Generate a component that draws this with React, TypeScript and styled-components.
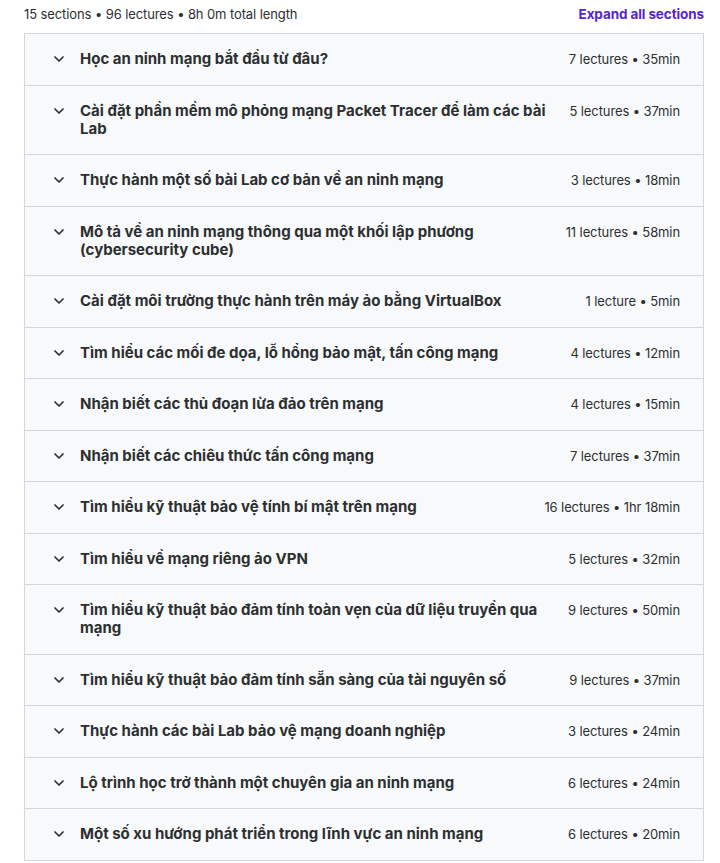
import React from "react";
import styled, { createGlobalStyle } from "styled-components";

const Global = createGlobalStyle`
  html, body { margin: 0; padding: 0; background: #ffffff; }
  body { font-family: Inter, "Noto Sans", sans-serif; color: #2d2f31; }
`;

const Page = styled.div`
  padding: 0 16px 0 24px;
  width: 720px;
  box-sizing: border-box;
`;

const TopBar = styled.div`
  display: flex;
  justify-content: space-between;
  align-items: center;
  height: 28px;
`;

const Summary = styled.span`
  font-size: 13px;
  color: #2d2f31;
  letter-spacing: -0.1px;
`;

const ExpandLink = styled.button`
  border: none;
  background: none;
  padding: 0;
  font-family: inherit;
  font-size: 13.5px;
  font-weight: 700;
  color: #5624d0;
  cursor: pointer;
  letter-spacing: -0.1px;
`;

const Panel = styled.div`
  margin-top: 5px;
  border: 1px solid #d1d7dc;
  border-bottom: none;
  width: 680px;
  box-sizing: border-box;
`;

const Row = styled.div`
  display: flex;
  align-items: flex-start;
  background: #f7f9fa;
  border-bottom: 1px solid #d1d7dc;
  padding: 16.25px 23px 16.25px 28px;
`;

const Chevron = styled.span`
  display: flex;
  width: 12px;
  height: 18px;
  align-items: center;
  justify-content: center;
  margin-right: 15px;
  flex-shrink: 0;
  color: #2d2f31;
`;

const Title = styled.h3`
  margin: 0;
  flex: 1;
  font-size: 15px;
  line-height: 18px;
  font-weight: 700;
  color: #2d2f31;
  letter-spacing: 0;
  padding-right: 22px;
`;

const Meta = styled.span`
  flex-shrink: 0;
  font-size: 13px;
  line-height: 18px;
  color: #2d2f31;
  letter-spacing: -0.1px;
`;

const sections: [string, string][] = [
  ["Học an ninh mạng bắt đầu từ đâu?", "7 lectures • 35min"],
  ["Cài đặt phần mềm mô phỏng mạng Packet Tracer để làm các bài Lab", "5 lectures • 37min"],
  ["Thực hành một số bài Lab cơ bản về an ninh mạng", "3 lectures • 18min"],
  ["Mô tả về an ninh mạng thông qua một khối lập phương (cybersecurity cube)", "11 lectures • 58min"],
  ["Cài đặt môi trường thực hành trên máy ảo bằng VirtualBox", "1 lecture • 5min"],
  ["Tìm hiểu các mối đe dọa, lỗ hổng bảo mật, tấn công mạng", "4 lectures • 12min"],
  ["Nhận biết các thủ đoạn lừa đảo trên mạng", "4 lectures • 15min"],
  ["Nhận biết các chiêu thức tấn công mạng", "7 lectures • 37min"],
  ["Tìm hiểu kỹ thuật bảo vệ tính bí mật trên mạng", "16 lectures • 1hr 18min"],
  ["Tìm hiểu về mạng riêng ảo VPN", "5 lectures • 32min"],
  ["Tìm hiểu kỹ thuật bảo đảm tính toàn vẹn của dữ liệu truyền qua mạng", "9 lectures • 50min"],
  ["Tìm hiểu kỹ thuật bảo đảm tính sẵn sàng của tài nguyên số", "9 lectures • 37min"],
  ["Thực hành các bài Lab bảo vệ mạng doanh nghiệp", "3 lectures • 24min"],
  ["Lộ trình học trở thành một chuyên gia an ninh mạng", "6 lectures • 24min"],
  ["Một số xu hướng phát triển trong lĩnh vực an ninh mạng", "6 lectures • 20min"],
];

const ChevronIcon = () => (
  <svg width="10" height="6" viewBox="0 0 10 6" fill="none">
    <path d="M1 1l4 4 4-4" stroke="currentColor" strokeWidth="1.7" strokeLinecap="round" strokeLinejoin="round" />
  </svg>
);

export default function App() {
  return (
    <Page>
      <Global />
      <TopBar>
        <Summary>15 sections • 96 lectures • 8h 0m total length</Summary>
        <ExpandLink>Expand all sections</ExpandLink>
      </TopBar>
      <Panel>
        {sections.map(([title, meta]) => (
          <Row key={title}>
            <Chevron>
              <ChevronIcon />
            </Chevron>
            <Title>{title}</Title>
            <Meta>{meta}</Meta>
          </Row>
        ))}
      </Panel>
    </Page>
  );
}
